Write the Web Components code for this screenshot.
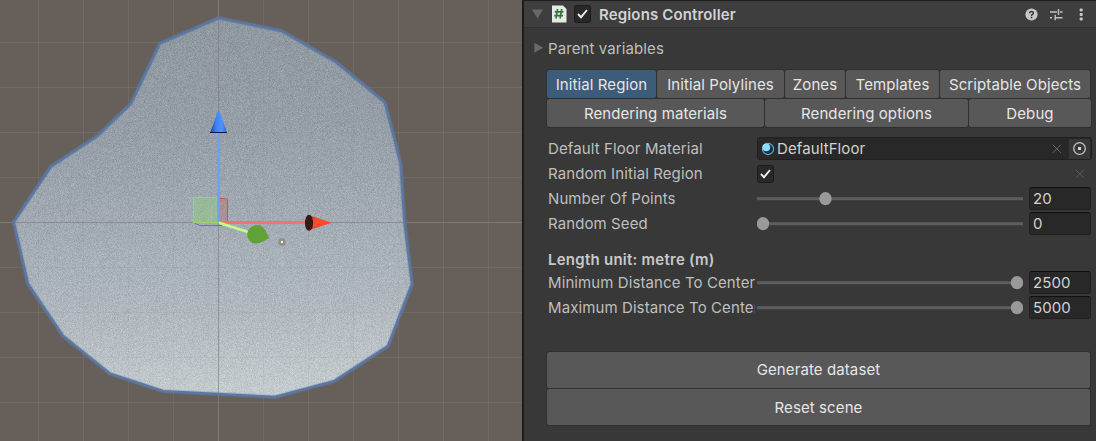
<!DOCTYPE html>
<html lang="en">
<head>
<meta charset="utf-8">
<title>Regions Controller</title>
<style>
html,body{margin:0;height:441px;overflow:hidden;background:#383838}
body{font:15px/20px Inter,"Liberation Sans",sans-serif;letter-spacing:.1px;color:#bfbfbf}
</style>
</head>
<body>
<editor-window>
  <scene-view slot="scene"></scene-view>
  <inspector-panel>
    <component-header slot="header">Regions Controller</component-header>
    <fold-out>Parent variables</fold-out>
    <tab-bar style="--cols:109px 127px 60px 93px 150px;margin-top:12px">
      <tab-item active>Initial Region</tab-item><tab-item>Initial Polylines</tab-item><tab-item>Zones</tab-item><tab-item>Templates</tab-item><tab-item>Scriptable Objects</tab-item>
    </tab-bar>
    <tab-bar style="--cols:217px 203px 122px;margin-top:1px">
      <tab-item>Rendering materials</tab-item><tab-item>Rendering options</tab-item><tab-item>Debug</tab-item>
    </tab-bar>
    <field-row style="margin-top:9px" label="Default Floor Material"><object-field>DefaultFloor</object-field></field-row>
    <field-row label="Random Initial Region"><toggle-field></toggle-field></field-row>
    <field-row label="Number Of Points"><slider-field value="20" pos="62.5"></slider-field></field-row>
    <field-row label="Random Seed"><slider-field value="0" pos="0"></slider-field></field-row>
    <section-title>Length unit: metre (m)</section-title>
    <field-row label="Minimum Distance To Center"><slider-field value="2500" pos="254"></slider-field></field-row>
    <field-row label="Maximum Distance To Center"><slider-field value="5000" pos="254"></slider-field></field-row>
    <action-button style="margin-top:32px">Generate dataset</action-button>
    <action-button style="margin-top:1px;--drop:2px">Reset scene</action-button>
  </inspector-panel>
</editor-window>
<script>
const define = (name, html) => customElements.define(name, class extends HTMLElement {
  constructor() {
    super();
    this.attachShadow({mode: 'open'}).innerHTML = typeof html === 'function' ? html(this) : html;
  }
});

define('editor-window', `<style>
:host{display:grid;grid-template-columns:522px 574px;height:441px}
</style><slot name="scene"></slot><slot></slot>`);

const outline = '218.5,18 281,30.7 336,62 385,102.5 400.5,163 404.5,222 412,284 388,346 334,381.3 275,397 163.5,391.3 110,373.8 63,336 28,284 13.7,222 51,166.5 97,136.3 131,103.5 160,43.3';
const gridV = [38.5,83.5,128.5,173.5,263.5,308.5,353.5,398.5,443.5,488.5].map(x => `M${x} 0V441`).join('');
const gridH = [42.5,87.5,132.5,177.5,267.5,312.5,357.5,402.5].map(y => `M0 ${y}H522`).join('');
define('scene-view', `<style>
:host{display:block;width:522px;height:441px;background:#675f59;overflow:hidden}
svg{display:block}
</style>
<svg width="522" height="441" viewBox="0 0 522 441" fill="none">
  <defs>
    <linearGradient id="floor" gradientUnits="userSpaceOnUse" x1="205" y1="20" x2="225" y2="398">
      <stop offset="0" stop-color="#8f989f"/><stop offset=".3" stop-color="#969fa7"/><stop offset=".55" stop-color="#a3acb4"/><stop offset=".78" stop-color="#b1b9bf"/><stop offset="1" stop-color="#c4cccf"/>
    </linearGradient>
    <filter id="grain" filterUnits="userSpaceOnUse" x="0" y="0" width="522" height="441" color-interpolation-filters="sRGB">
      <feTurbulence type="fractalNoise" baseFrequency="1.37" numOctaves="2" seed="4"/>
      <feColorMatrix values="1 0 0 0 0 1 0 0 0 0 1 0 0 0 0 0 0 0 0 1" result="n"/>
      <feComposite in="SourceGraphic" in2="n" operator="arithmetic" k2="1" k3=".22" k4="-.11"/>
      <feComposite in2="SourceGraphic" operator="in"/>
    </filter>
    <linearGradient id="blue"><stop offset="0" stop-color="#1d3f9a"/><stop offset=".35" stop-color="#3f83f5"/><stop offset=".7" stop-color="#4c94ff"/><stop offset="1" stop-color="#2f62c4"/></linearGradient>
    <linearGradient id="red" x2="0" y2="1"><stop offset="0" stop-color="#b5301c"/><stop offset=".3" stop-color="#fb4a2c"/><stop offset=".7" stop-color="#fb4a2c"/><stop offset="1" stop-color="#c43a24"/></linearGradient>
  </defs>
  <path d="${gridV}${gridH}" stroke="#7f8580" stroke-opacity=".25"/>
  <path d="M218.5 0V441M0 222.5H522" stroke="#85847f" stroke-opacity=".7"/>
  <polygon points="${outline}" fill="url(#floor)" filter="url(#grain)"/>
  <path d="${gridV}${gridH}" stroke="#7f8580" stroke-opacity=".1"/>
  <path d="M218.5 18V397M14 222.5H404" stroke="#777a7a" stroke-opacity=".6"/>
  <polygon points="${outline}" stroke="#6381b0" stroke-opacity=".3" stroke-width="4.5" stroke-linejoin="round"/>
  <polygon points="${outline}" stroke="#5b77a2" stroke-width="2.5" stroke-linejoin="round"/>
  <rect x="219" y="199" width="8" height="23" fill="#c0564c" fill-opacity=".3"/>
  <path d="M219 198.5H224L227.5 199.5V222" stroke="#cf5540"/>
  <path d="M195 223.5L200 225.5H222" stroke="#447be0"/>
  <rect x="193.5" y="197.5" width="25" height="25" fill="#8ed36e" fill-opacity=".38" stroke="#98d571"/>
  <path d="M219 222.5H310" stroke="#f57565" stroke-width="3"/>
  <path d="M218.7 222V132" stroke="#6aa0fb" stroke-width="2.7"/>
  <path d="M219 222.7L248 232" stroke="#c2ff86" stroke-width="2.7"/>
  <path d="M218.7 109L227 132.5H210.3Z" fill="url(#blue)"/><path d="M210 132.5H227" stroke="#101c3c"/>
  <path d="M308 215L332 222.8L309 230Z" fill="url(#red)"/><ellipse cx="309" cy="222.8" rx="4.1" ry="8" fill="#391917"/>
  <path d="M253 226Q261 222.5 265.5 230.5L269.3 238L261 242.6Q251 246 247.5 237.5Q246 229.5 253 226Z" fill="#61a237"/>
  <circle cx="282" cy="242" r="3.8" fill="#87847d" fill-opacity=".8"/><circle cx="282" cy="242" r="2.1" stroke="#9c968a"/><rect x="281" y="241" width="2" height="2" fill="#fff6df"/>
</svg>`);

define('inspector-panel', `<style>
:host{display:block;box-sizing:border-box;width:574px;height:441px;background:#383838;border-left:2px solid #1c1c1c}
.body{display:flex;flex-direction:column;padding-left:23px}
</style><slot name="header"></slot><div class="body"><slot></slot></div>`);

define('component-header', `<style>
:host{display:flex;align-items:center;box-sizing:border-box;height:28px;background:#3e3e3e;border-top:1px solid #1f1f1f;border-bottom:1px solid #303030;font-weight:600;color:#d2d2d2;padding-left:8px}
.title{margin-left:8px;flex:1;letter-spacing:.15px;padding-top:2px}
svg{display:block;flex:none}
</style>
<svg width="12" height="10"><path d="M0 .5H11L5.5 9.5Z" fill="#686868"/></svg>
<svg width="16" height="18" style="margin-left:7px"><path d="M1 .5H12L15.5 4V17.5H1Z" fill="#e8e8e8"/><path d="M6.6 4L5 13.5M10.7 4L9.1 13.5M3.7 6.8H12.5M3.2 10.6H12" stroke="#34773a" stroke-width="1.7" fill="none"/></svg>
<svg width="17" height="18" style="margin-left:7px"><rect x=".5" y=".5" width="16" height="17" rx="2" fill="#282828" stroke="#1c1c1c"/><path d="M4 9L7 12.2L13 5" stroke="#ededed" stroke-width="1.9" fill="none"/></svg>
<span class="title"><slot></slot></span>
<svg width="13" height="13" style="margin-right:12px"><circle cx="6.5" cy="6.5" r="6.1" fill="#c8c8c8"/><path d="M4.6 5.2Q4.6 3.4 6.5 3.4T8.4 5.1Q8.4 6 7.3 6.5T6.5 8" stroke="#383838" stroke-width="1.5" fill="none"/><rect x="5.7" y="8.8" width="1.6" height="1.5" fill="#383838"/></svg>
<svg width="13" height="13" style="margin-right:16px"><path d="M0 4H7M10 4H12.5M8.5 1V7M0 9.8H2M5 9.8H12.5M5.2 6.7V12.3" stroke="#c4c4c4" stroke-width="1.4" fill="none"/></svg>
<svg width="5" height="13" style="margin-right:12px"><g fill="#c8c8c8"><rect x=".7" y=".4" width="3" height="3" rx=".8"/><rect x=".7" y="5" width="3" height="3" rx=".8"/><rect x=".7" y="9.5" width="3" height="3" rx=".8"/></g></svg>`);

define('fold-out', `<style>
:host{display:flex;align-items:center;height:20px;margin-top:10px;margin-left:-13px;gap:4px}
span{padding-top:2px}
svg{display:block;flex:none}
</style><svg width="10" height="12"><path d="M.3.8V10.8L9.3 5.8Z" fill="#686868"/></svg><span><slot></slot></span>`);

define('tab-bar', `<style>
:host{display:grid;grid-template-columns:var(--cols);gap:1px;height:28px}
</style><slot></slot>`);

define('tab-item', `<style>
:host{display:flex;align-items:center;justify-content:center;background:#585858;color:#e6e6e6;border-radius:2.5px;box-shadow:0 0 0 1px #303030;white-space:nowrap}
:host([active]){background:#3d5c79}
span{padding-top:2px}
</style><span><slot></slot></span>`);

define('field-row', el => `<style>
:host{display:grid;grid-template-columns:207px 335px;column-gap:2px;height:25px;align-items:center;margin-left:1px}
.label{overflow:hidden;white-space:nowrap}
</style><div class="label">${el.getAttribute('label')}</div><slot></slot>`);

define('object-field', `<style>
:host{display:flex;align-items:center;box-sizing:border-box;height:23px;background:#282828;border:1px solid #202020;border-radius:3px;padding:0 1px 0 3px;color:#d2d2d2}
svg{display:block;flex:none}
.name{flex:1;margin-left:2px}
.pick{display:flex;align-items:center;justify-content:center;width:21px;height:20px;background:#373737}
</style>
<svg width="14" height="14"><circle cx="7" cy="7" r="5.6" fill="#15303c" stroke="#6aaed0" stroke-width="1.1"/><circle cx="5.3" cy="5.3" r="3.9" fill="#8cdcff"/></svg>
<span class="name"><slot></slot></span>
<svg width="10" height="10" style="margin-right:7px"><path d="M.8 .8L8.8 8.8M8.8 .8L.8 8.8" stroke="#6b6b6b"/></svg>
<span class="pick"><svg width="15" height="15"><circle cx="7.5" cy="7.5" r="5.8" fill="none" stroke="#c4c4c4" stroke-width="1.3"/><rect x="6" y="6" width="3" height="3" fill="#d2d2d2"/></svg></span>`);

define('toggle-field', `<style>
:host{display:flex;align-items:center;justify-content:space-between;height:23px}
svg{display:block}
</style><svg width="17" height="18"><rect x=".5" y=".5" width="16" height="17" rx="2" fill="#282828" stroke="#1c1c1c"/><path d="M4 9L7 12.2L13 5" stroke="#ededed" stroke-width="1.9" fill="none"/></svg>
<svg width="10" height="10" style="margin-right:7px"><path d="M.8 .8L8.8 8.8M8.8 .8L.8 8.8" stroke="#5c5c5c"/></svg>`);

define('slider-field', el => `<style>
:host{display:grid;grid-template-columns:266px 62px;column-gap:6px;align-items:center}
svg{display:block}
.num{box-sizing:border-box;height:23px;line-height:22px;background:#282828;border:1px solid #202020;border-top-color:#0f0f0f;border-radius:3px;padding-left:3px;color:#d2d2d2}
</style><svg width="266" height="14"><rect y="5.2" width="266" height="3" fill="#5e5e5e"/><ellipse cx="${+el.getAttribute('pos') + 6}" cy="6.7" rx="6.2" ry="6.6" fill="#999"/></svg>
<div class="num">${el.getAttribute('value')}</div>`);

define('section-title', `<style>
:host{display:block;height:34px;line-height:48px;margin-left:1px;font-weight:600;letter-spacing:.25px;color:#c8c8c8}
</style><slot></slot>`);

define('action-button', `<style>
:host{display:flex;align-items:center;justify-content:center;width:543px;height:36px;background:#585858;color:#e6e6e6;border-radius:2.5px;box-shadow:0 0 0 1px #303030}
span{padding-top:var(--drop,0)}
</style><span><slot></slot></span>`);
</script>
</body>
</html>
